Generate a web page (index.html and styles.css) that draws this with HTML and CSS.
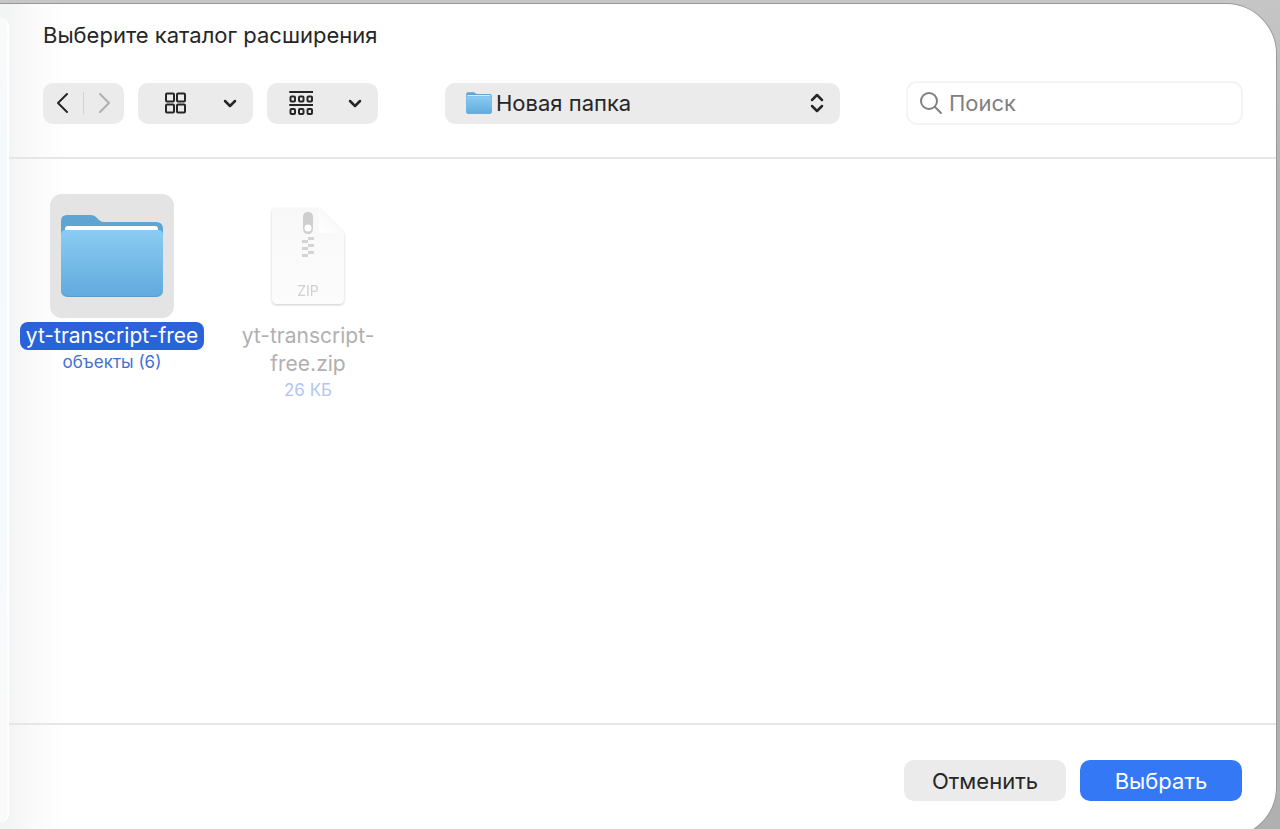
FILE: index.html
```
<!DOCTYPE html>
<html lang="ru">
<head>
	<meta charset="utf-8" />
	<meta name="viewport" content="width=device-width,initial-scale=1.0" />
	<title>Выберите каталог расширения</title>
	<link rel="stylesheet" href="styles.css">
</head>
<body>
<!-- folder shape, used in the path list and in the file area -->
<svg class="defs" aria-hidden="true">
	<defs>
		<linearGradient id="folder-front" x1="0" y1="0" x2="0" y2="1">
			<stop offset="0" stop-color="#8accf3" />
			<stop offset="1" stop-color="#62abdc" />
		</linearGradient>
		<linearGradient id="page" x1="0" y1="0" x2="0" y2="1">
			<stop offset="0" stop-color="#f8f8f8" />
			<stop offset="1" stop-color="#fcfcfc" />
		</linearGradient>
		<linearGradient id="page-fold" x1="0" y1="1" x2="1" y2="0">
			<stop offset="0" stop-color="#ffffff" />
			<stop offset="0.5" stop-color="#fafafa" />
		</linearGradient>
		<symbol id="folder" viewBox="0 0 104 84">
			<path d="M1 7Q1 1 7 1H31Q34 1 36 3L39 6Q41 8 44 8H96Q103 8 103 15V40H1Z" fill="#5fa5d4" />
			<path d="M5 18V15Q5 12 8 12H95Q98 12 98 15V18Z" fill="#fff" />
			<path d="M1 21Q1 16 6 16H98Q103 16 103 21V76Q103 83 96 83H8Q1 83 1 76Z" fill="#5a9ccb" />
			<path d="M1 21Q1 16 6 16H98Q103 16 103 21V75Q103 82 96 82H8Q1 82 1 75Z" fill="url(#folder-front)" />
		</symbol>
	</defs>
</svg>
<div class="dialog" role="dialog" aria-labelledby="title">
	<div class="sidebar"></div>
	<div class="main">
		<header class="header">
			<h1 id="title">Выберите каталог расширения</h1>
			<div class="toolbar">
				<div class="nav">
					<button type="button" aria-label="Назад">
						<svg width="14" height="22" viewBox="0 0 14 22"><path d="M11 2L2 11L11 20" /></svg>
					</button>
					<button type="button" class="next" aria-label="Вперёд" disabled>
						<svg width="14" height="22" viewBox="0 0 14 22"><path d="M3 2L12 11L3 20" /></svg>
					</button>
				</div>
				<button type="button" class="view" aria-label="Вид" aria-haspopup="true">
					<svg width="22" height="22" viewBox="0 0 22 22">
						<rect x="1" y="1.5" width="8" height="8" rx="1" />
						<rect x="12" y="1.5" width="8" height="8" rx="1" />
						<rect x="1" y="12.5" width="8" height="8" rx="1" />
						<rect x="12" y="12.5" width="8" height="8" rx="1" />
					</svg>
					<svg class="arrow" width="14" height="10" viewBox="0 0 14 10"><path d="M2 3L7 8L12 3" /></svg>
				</button>
				<button type="button" class="view group" aria-label="Группировка" aria-haspopup="true">
					<svg width="24" height="26" viewBox="0 0 24 26">
						<path d="M1 2H24M1 15H24" />
						<rect x="1.5" y="6.5" width="4.5" height="5" rx="1" />
						<rect x="10" y="6.5" width="4.5" height="5" rx="1" />
						<rect x="18.5" y="6.5" width="4.5" height="5" rx="1" />
						<rect x="1.5" y="19" width="4.5" height="5" rx="1" />
						<rect x="10" y="19" width="4.5" height="5" rx="1" />
						<rect x="18.5" y="19" width="4.5" height="5" rx="1" />
					</svg>
					<svg class="arrow" width="14" height="10" viewBox="0 0 14 10"><path d="M2 3L7 8L12 3" /></svg>
				</button>
				<div class="path">
					<svg class="path-icon" width="26" height="22" viewBox="0 0 104 84" preserveAspectRatio="none"><use href="#folder" /></svg>
					<select aria-label="Папка">
						<option>Новая папка</option>
					</select>
					<svg class="updown" width="14" height="20" viewBox="0 0 14 20"><path d="M2 7L7 2L12 7M2 13L7 18L12 13" /></svg>
				</div>
				<label class="search">
					<svg width="24" height="24" viewBox="0 0 24 24"><circle cx="10" cy="10" r="8" /><path d="M16 16L22 22" /></svg>
					<input type="text" placeholder="Поиск" aria-label="Поиск">
				</label>
			</div>
		</header>
		<ul class="files">
			<li class="file selected">
				<div class="icon">
					<svg width="104" height="84"><use href="#folder" /></svg>
				</div>
				<span class="name">yt-transcript-free</span>
				<span class="meta">объекты (6)</span>
			</li>
			<li class="file disabled">
				<div class="icon">
					<svg class="zip" width="74" height="98" viewBox="0 0 74 98">
						<path d="M5 1H48L73 26V92Q73 97 68 97H6Q1 97 1 92V5Q1 1 5 1Z" fill="url(#page)" />
						<path d="M48 1V22Q48 26 52 26H73Z" fill="url(#page-fold)" />
						<path d="M32 10Q32 5 37 5Q42 5 42 10V21Q42 27 37 27Q32 27 32 21Z" fill="#cfcfcf" />
						<circle cx="37" cy="21" r="3.5" fill="#fff" />
						<path d="M37 30H43V33H37ZM31 33H37V36H31ZM37 37H43V40H37ZM31 40H37V43H31ZM37 44H43V47H37ZM31 47H37V50H31Z" fill="#d4d4d4" />
						<text x="37" y="89" text-anchor="middle">ZIP</text>
					</svg>
				</div>
				<span class="name">yt-transcript-free.zip</span>
				<span class="meta">26 КБ</span>
			</li>
		</ul>
		<footer class="footer">
			<button type="button" class="btn">Отменить</button>
			<button type="button" class="btn primary">Выбрать</button>
		</footer>
	</div>
</div>
</body>
</html>
```
FILE: styles.css
```
* {
	margin: 0;
	padding: 0;
	box-sizing: border-box;
}
body {
	height: 100vh;
	padding: 4px 4px 0 0;
	overflow: hidden;
	background: linear-gradient(#c6c6c6, #b4b4b4 20%, #b0b0b0);
	font-family: Inter, "Noto Sans", sans-serif;
	font-size: 22px;
	color: #262626;
}
button,input,select {
	font: inherit;
	color: inherit;
	border: none;
	background: none;
	outline: none;
}
ul {
	list-style: none;
}
svg {
	display: block;
	flex: none;
}
.defs {
	position: absolute;
	width: 0;
	height: 0;
}
/* the window runs past the bottom edge of the screen */
.dialog {
	display: flex;
	height: calc(100vh + 4px);
	background: linear-gradient(to right, #f3f4f4 9px, #fafafa 32px, #fff 68px);
	border-radius: 0 50px 50px 0;
	box-shadow: 0 0 0 1px #999;
	overflow: hidden;
}
.sidebar {
	width: 9px;
	margin: 14px 0;
	background: linear-gradient(#fafafa, #f3f9fd 20%, #f5fafe 60%, #fafafa 85%);
	border-right: 2px solid #fff;
	border-radius: 0 9px 9px 0;
}
.main {
	flex: 1;
	display: flex;
	flex-direction: column;
	min-width: 0;
}
.header {
	padding: 17px 33px 32px 34px;
	border-bottom: 2px solid #e6e6e6;
}
.header h1 {
	font-size: 22px;
	line-height: 28px;
	font-weight: 400;
}
.toolbar {
	display: flex;
	align-items: center;
	gap: 14px;
	margin-top: 32px;
}
.nav,.view,.path {
	display: flex;
	align-items: center;
	height: 41px;
	background: #ebebeb;
	border-radius: 10px;
}
.nav {
	width: 81px;
}
.nav button {
	flex: 1;
	display: flex;
	justify-content: center;
}
.nav .next {
	color: #b0b0b0;
	border-left: 1px solid #d2d2d2;
}
.toolbar svg {
	fill: none;
	stroke: currentColor;
	stroke-width: 2;
	stroke-linecap: round;
	stroke-linejoin: round;
}
.view {
	width: 115px;
	padding: 0 16px 0 27px;
	justify-content: space-between;
}
.view.group {
	width: 111px;
	padding: 0 16px 0 22px;
}
.toolbar .arrow,.toolbar .updown {
	stroke-width: 2.5;
}
.path {
	position: relative;
	flex: 1 1 395px;
	margin-left: 53px;
	min-width: 0;
}
.toolbar .path-icon {
	position: absolute;
	left: 21px;
	stroke: none;
	pointer-events: none;
}
.path select {
	width: 100%;
	height: 41px;
	padding: 0 40px 0 51px;
	appearance: none;
}
.path .updown {
	position: absolute;
	right: 16px;
	pointer-events: none;
}
.search {
	flex: 1 1 337px;
	display: flex;
	align-items: center;
	gap: 6px;
	height: 44px;
	margin-left: 52px;
	padding: 0 11px;
	min-width: 0;
	border: 2px solid #f4f4f4;
	border-radius: 11px;
	color: #808080;
}
.search input {
	flex: 1;
	min-width: 0;
}
.search input::placeholder {
	color: #808080;
	opacity: 1;
}
.files {
	flex: 1;
	display: flex;
	flex-wrap: wrap;
	align-content: flex-start;
	padding: 35px 5px;
}
.file {
	display: flex;
	flex-direction: column;
	align-items: center;
	width: 196px;
	text-align: center;
}
.icon {
	display: flex;
	align-items: center;
	justify-content: center;
	width: 124px;
	height: 124px;
	margin-bottom: 4px;
	border-radius: 12px;
}
.name {
	max-width: 190px;
	padding: 0 6px;
	font-size: 21px;
	line-height: 28px;
	border-radius: 8px;
}
.meta {
	font-size: 17px;
	line-height: 24px;
	color: #3f70d6;
}
.selected .icon {
	background: #e4e4e4;
}
.selected .name {
	background: #2962d9;
	color: #fff;
}
.disabled .name {
	max-width: 160px;
	color: #b0b0b0;
}
.disabled .meta {
	color: #b2c6ef;
}
.zip {
	filter: drop-shadow(0 1px 1px #ccc);
}
.zip text {
	font-size: 14px;
	fill: #d0d0d0;
}
.footer {
	display: flex;
	justify-content: flex-end;
	gap: 14px;
	padding: 35px 34px 36px;
	border-top: 2px solid #e6e6e6;
}
.btn {
	width: 162px;
	height: 41px;
	background: #ebebeb;
	border-radius: 10px;
}
.btn.primary {
	background: #3478f6;
	color: #fff;
}
```
